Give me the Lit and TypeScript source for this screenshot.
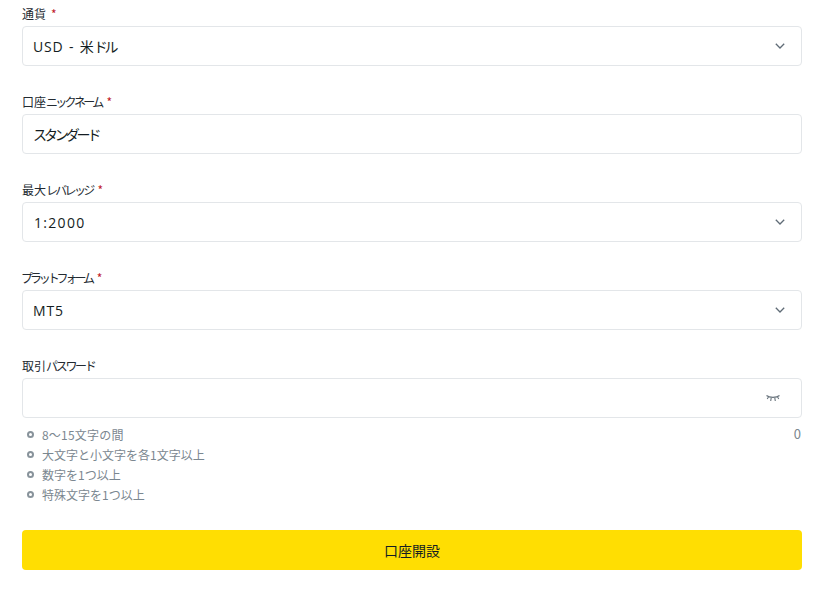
import { LitElement, html, css, svg } from "lit";
import { customElement } from "lit/decorators.js";

const chevron = html`<svg class="chev" width="10" height="6" viewBox="0 0 10 6"><path d="M.8.8 5 5 9.200.8" fill="none" stroke="#5f6b76" stroke-width="1.3"/></svg>`;
const eye = html`<svg class="eye" width="14" height="8" viewBox="0 0 14 8" fill="none" stroke="#68737c" stroke-width="1.1">${svg`<path d="M.5 1.500C3.500 4 10.500 4 13.500 1.500"/><path d="M2.500 3 1.200 5M5.200 3.800 4.700 7M8.800 3.800 9.300 7M11.500 3l1.300 2"/>`}</svg>`;

@customElement("app-root")
export class AppRoot extends LitElement {
  static styles = css`
    :host { display: block; width: 833px; height: 592px; overflow: hidden; background: #fff; box-sizing: border-box; padding: 6px 31px 0 22px; font-family: "Noto Sans CJK JP", "Noto Sans", sans-serif; color: #1f2933; }
    .field { display: flex; flex-direction: column; gap: 4px; margin-bottom: 28px; }
    .field.last { margin-bottom: 0; }
    label { font-size: 12px; line-height: 16px; color: #232a31; }
    .kl { letter-spacing: -2.7px; }
    .kl.tight { letter-spacing: -3.1px; margin-left: -1px; }
    .kl.loose { letter-spacing: -2.3px; }
    .req { color: #c0202a; margin-left: 5px; }
    .box { height: 40px; box-sizing: border-box; border: 1px solid #e3e6e9; border-radius: 4px; display: flex; align-items: center; justify-content: space-between; padding: 0 16px 0 10px; font-size: 14px; color: #141d22; }
    .kv { letter-spacing: -3.1px; }
    .lat { font-family: "Open Sans", sans-serif; letter-spacing: 0.8px; word-spacing: 1px; }
    .num { letter-spacing: 1.3px; margin-left: 1px; }
    .eye { margin-right: 5px; }
    .hints { display: flex; justify-content: space-between; margin-top: 6px; padding-left: 5px; font-size: 12px; color: #7b8790; }
    ul { list-style: none; margin: 0; padding: 0; }
    li { display: flex; align-items: center; gap: 8px; height: 20px; }
    li::before { content: ""; width: 3px; height: 3px; border: 2px solid #88939b; border-radius: 50%; }
    .wide { letter-spacing: 0.2px; }
    .count { font-size: 13px; padding-right: 1px; line-height: 20px; }
    button { display: block; width: 100%; height: 40px; margin-top: 26px; border: 0; border-radius: 4px; background: #ffde02; color: #141d22; font: inherit; font-size: 14px; }
  `;
  render() {
    return html`
      <div class="field"><label>通貨<span class="req">*</span></label><div class="box"><span><span class="lat">USD - </span>米<span class="kv">ドル</span></span>${chevron}</div></div>
      <div class="field"><label>口座<span class="kl">ニックネーム</span><span class="req">*</span></label><div class="box"><span class="kv">スタンダード</span></div></div>
      <div class="field"><label>最大<span class="kl">レバレッジ</span><span class="req">*</span></label><div class="box"><span class="lat num">1:2000</span>${chevron}</div></div>
      <div class="field"><label><span class="kl tight">プラットフォーム</span><span class="req">*</span></label><div class="box"><span class="lat">MT5</span>${chevron}</div></div>
      <div class="field last"><label>取引<span class="kl loose">パスワード</span></label><div class="box"><span></span>${eye}</div></div>
      <div class="hints">
        <ul>
          <li><span class="wide">8～15文字の間</span></li>
          <li>大文字と小文字を各1文字以上</li>
          <li>数字を1つ以上</li>
          <li>特殊文字を1つ以上</li>
        </ul>
        <span class="count">0</span>
      </div>
      <button>口座開設</button>
    `;
  }
}
